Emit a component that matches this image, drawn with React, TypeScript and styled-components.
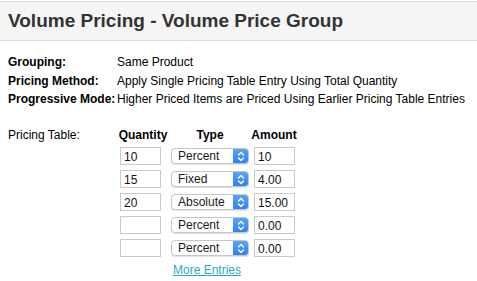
import React from 'react'
import styled, { createGlobalStyle } from 'styled-components'

interface Entry {
    quantity: string
    type: string
    amount: string
}

const entries: Array<Entry> = [
    { quantity: '10', type: 'Percent', amount: '10' },
    { quantity: '15', type: 'Fixed', amount: '4.00' },
    { quantity: '20', type: 'Absolute', amount: '15.00' },
    { quantity: '', type: 'Percent', amount: '0.00' },
    { quantity: '', type: 'Percent', amount: '0.00' },
]

const details = [
    { label: 'Grouping:', value: 'Same Product' },
    { label: 'Pricing Method:', value: 'Apply Single Pricing Table Entry Using Total Quantity' },
    { label: 'Progressive Mode:', value: 'Higher Priced Items are Priced Using Earlier Pricing Table Entries' },
]

const Chevrons = () => (
    <svg width="8" height="11" viewBox="0 0 8 11" fill="none">
        <path d="M1.5 4 L4 1.5 L6.5 4" stroke="#fff" strokeWidth="1.4" strokeLinecap="round" strokeLinejoin="round" />
        <path d="M1.5 7 L4 9.5 L6.5 7" stroke="#fff" strokeWidth="1.4" strokeLinecap="round" strokeLinejoin="round" />
    </svg>
)

const App: React.FC = () => {
    return (
        <React.Fragment>
            <GlobalStyle />
            <Page>
                <Header>
                    <Title>Volume Pricing - Volume Price Group</Title>
                </Header>

                <Details>
                    {details.map((d) => (
                        <React.Fragment key={d.label}>
                            <Legend>{d.label}</Legend>
                            <Value>{d.value}</Value>
                        </React.Fragment>
                    ))}
                </Details>

                <TableSection>
                    <SectionLabel>Pricing Table:</SectionLabel>
                    <PriceGrid>
                        <ColHead>Quantity</ColHead>
                        <ColHead>Type</ColHead>
                        <ColHead>Amount</ColHead>
                        {entries.map((e, i) => (
                            <React.Fragment key={i}>
                                <Cell>
                                    <TextBox defaultValue={e.quantity} />
                                </Cell>
                                <Cell>
                                    <SelectBox>
                                        <SelectText>{e.type}</SelectText>
                                        <SelectArrow>
                                            <Chevrons />
                                        </SelectArrow>
                                    </SelectBox>
                                </Cell>
                                <Cell>
                                    <TextBox defaultValue={e.amount} />
                                </Cell>
                            </React.Fragment>
                        ))}
                        <LinkRow>
                            <MoreLink href="#">More Entries</MoreLink>
                        </LinkRow>
                    </PriceGrid>
                </TableSection>
            </Page>
        </React.Fragment>
    )
}

export default App

const GlobalStyle = createGlobalStyle`
    html, body {
        margin: 0;
        padding: 0;
        background: #ffffff;
    }
    body {
        font-family: "Liberation Sans", Arial, sans-serif;
        font-size: 12px;
        color: #000;
    }
`

const Page = styled.div`
    width: 477px;
    height: 281px;
    overflow: hidden;
    padding-top: 1px;
`

const Header = styled.div`
    height: 38px;
    background: #f5f5f5;
    border-top: 1px solid #dcdcdc;
    border-bottom: 1px solid #dcdcdc;
    display: flex;
    align-items: center;
    padding: 0 8px;
`

const Title = styled.h1`
    margin: 0;
    font-size: 19px;
    font-weight: bold;
    color: #333333;
    padding-bottom: 1px;
`

const Details = styled.div`
    display: grid;
    grid-template-columns: 109px auto;
    grid-auto-rows: 18.5px;
    align-items: center;
    padding: 12px 8px 0 8px;
`

const Legend = styled.div`
    font-weight: bold;
    white-space: nowrap;
`

const Value = styled.div`
    white-space: nowrap;
`

const TableSection = styled.div`
    display: flex;
    align-items: flex-start;
    padding: 17px 8px 0 8px;
`

const SectionLabel = styled.div`
    width: 109px;
    line-height: 19px;
`

const PriceGrid = styled.div`
    display: grid;
    grid-template-columns: 52px 82px 46px;
    grid-template-rows: 19px;
    grid-auto-rows: 23px;
`

const ColHead = styled.div`
    font-weight: bold;
    text-align: center;
    line-height: 19px;
    white-space: nowrap;
`

const Cell = styled.div`
    display: flex;
    align-items: center;
    padding: 0 2px;
`

const TextBox = styled.input`
    box-sizing: border-box;
    width: 41px;
    height: 18px;
    border: 1px solid #c9c9c9;
    border-radius: 0;
    padding: 1px 3px 0 3px;
    margin: 0 0 0 1px;
    font-family: "Liberation Sans", Arial, sans-serif;
    font-size: 12px;
    color: #111;
    outline: none;
    background: #fff;
`

const SelectBox = styled.div`
    box-sizing: border-box;
    width: 78px;
    height: 16px;
    display: flex;
    align-items: stretch;
    border: 1px solid #c6c6c6;
    border-radius: 4px;
    background: #fff;
    box-shadow: 0 1px 1px rgba(0, 0, 0, 0.12);
    overflow: hidden;
`

const SelectText = styled.div`
    flex: 1;
    padding-left: 6px;
    line-height: 14px;
    color: #1a1a1a;
    white-space: nowrap;
`

const SelectArrow = styled.div`
    width: 16px;
    margin: -1px -1px -1px 0;
    background: linear-gradient(#5ca7f7, #2a7ef3);
    border-radius: 0 4px 4px 0;
    display: flex;
    align-items: center;
    justify-content: center;
`

const LinkRow = styled.div`
    grid-column: 1 / 4;
    display: flex;
    justify-content: center;
    line-height: 20px;
`

const MoreLink = styled.a`
    color: #2ba8c6;
    text-decoration: underline;
`
